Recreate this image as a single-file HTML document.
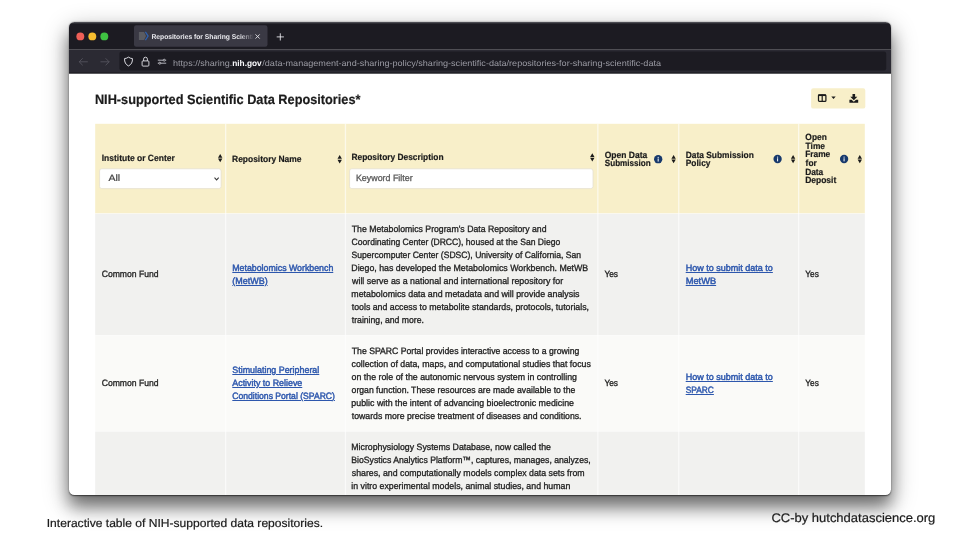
<!DOCTYPE html>
<html lang="en">
<head>
<meta charset="utf-8">
<title>Repositories for Sharing Scientific Data</title>
<style>
html,body{margin:0;padding:0;background:#fff;}
body{width:960px;height:540px;position:relative;overflow:hidden;font-family:"Liberation Sans",sans-serif;text-rendering:geometricPrecision;}
.t{position:absolute;white-space:pre;line-height:14px;height:14px;font-family:"Liberation Sans",sans-serif;transform-origin:0 50%;}
.win{position:absolute;left:69px;top:22px;width:822px;height:473px;border-radius:5.5px;background:#fff;
  box-shadow:0 0.8px 1.5px rgba(0,0,0,.6),0 12px 16px rgba(0,0,0,.42),0 8px 27px rgba(0,0,0,.33);}
.clip{position:absolute;left:0;top:0;width:822px;height:473px;border-radius:5.5px;overflow:hidden;}
.pg{position:absolute;left:-69px;top:-22px;width:960px;height:540px;will-change:transform;}
svg.shapes{position:absolute;left:0;top:0;}
</style>
</head>
<body>
<div class="win"><div class="clip"><div class="pg">
<svg class="shapes" width="960" height="540" viewBox="0 0 960 540">
  <!-- browser chrome -->
  <rect x="60" y="20" width="840" height="29.4" fill="#1c1b22"/>
  <rect x="60" y="22" width="840" height="0.9" fill="#56565c"/>
  <rect x="60" y="22.9" width="840" height="0.8" fill="#34343a"/>
  <rect x="60" y="49.3" width="840" height="24.1" fill="#2b2a33"/>
  <rect x="60" y="72.7" width="840" height="0.8" fill="#0e0e12"/>
  <rect x="134" y="25.2" width="133.5" height="21.6" rx="2.2" fill="#3a3944"/>
  <rect x="119.4" y="51.5" width="766.8" height="19" rx="2.2" fill="#1c1b22"/>
  <!-- traffic lights -->
  <circle cx="80.3" cy="36.4" r="3.95" fill="#ee5f57"/>
  <circle cx="92.3" cy="36.4" r="3.95" fill="#f6bd2f"/>
  <circle cx="104.3" cy="36.4" r="3.95" fill="#3fc242"/>
  <!-- favicon -->
  <path d="M138.9 32.1 H144.1 L146 36.05 L144.1 40 H138.9 Z" fill="#5b5c62"/>
  <path d="M145.4 31.9 L148.1 36.05 L145.4 40.2" fill="none" stroke="#2f62b0" stroke-width="1.25"/>
  <!-- tab close / plus -->
  <g transform="translate(255.3,34.2)"><path d="M0.2 0.2 L4.4 4.4 M4.4 0.2 L0.2 4.4" stroke="#e4e4ea" stroke-width="0.9" fill="none"/></g>
  <g transform="translate(276.5,33.1)"><path d="M3.8 0.2 V7.4 M0.2 3.8 H7.4" stroke="#f0f0f4" stroke-width="0.85" fill="none"/></g>
  <!-- nav arrows -->
  <g transform="translate(78.5,58.1)"><path d="M8.9 3.7 H0.8 M3.9 0.5 L0.7 3.7 L3.9 6.9" stroke="#55545d" stroke-width="0.9" fill="none" stroke-linecap="round" stroke-linejoin="round"/></g>
  <g transform="translate(100.2,58.1)"><path d="M0.7 3.7 H8.8 M5.7 0.5 L8.9 3.7 L5.7 6.9" stroke="#55545d" stroke-width="0.9" fill="none" stroke-linecap="round" stroke-linejoin="round"/></g>
  <!-- shield -->
  <g transform="translate(123.8,56.5) scale(1.07,1.05)"><path d="M4.4 0.6 C3.2 1.5 2 1.9 0.7 2 C0.6 5.2 1.6 7.7 4.4 9 C7.2 7.7 8.2 5.2 8.1 2 C6.8 1.9 5.6 1.5 4.4 0.6 Z" fill="none" stroke="#e2e2e8" stroke-width="0.9" stroke-linejoin="round"/></g>
  <!-- lock -->
  <g transform="translate(141.4,56.3)"><rect x="0.7" y="4.6" width="6.8" height="5.2" rx="0.9" fill="none" stroke="#e2e2e8" stroke-width="0.9"/><path d="M2.2 4.6 V2.8 A1.9 1.9 0 0 1 6 2.8 V4.6" fill="none" stroke="#e2e2e8" stroke-width="0.9"/></g>
  <!-- permissions -->
  <g transform="translate(157.6,58.6)"><path d="M0.2 1.6 H5.6 M7.6 1.6 H8.6 M0.2 4.6 H1.2 M3.2 4.6 H8.6" stroke="#cfcfd6" stroke-width="0.85" fill="none"/><circle cx="6.6" cy="1.6" r="1" fill="none" stroke="#cfcfd6" stroke-width="0.8"/><circle cx="2.2" cy="4.6" r="1" fill="none" stroke="#cfcfd6" stroke-width="0.8"/></g>

  <!-- page content -->
  <rect x="811.1" y="88.3" width="54.2" height="20.3" rx="2.2" fill="#f8efc9"/>
  <!-- columns icon -->
  <g transform="translate(817.9,94.2)"><rect x="0.6" y="0.6" width="7.4" height="6.6" rx="0.9" fill="none" stroke="#1b1b1b" stroke-width="1.25"/><path d="M0.5 1.05 H8.1" stroke="#1b1b1b" stroke-width="1.6"/><path d="M4.3 0.6 V7.2" stroke="#1b1b1b" stroke-width="1.2"/></g>
  <g transform="translate(831.1,96.4)"><path d="M0.2 0.1 H4.6 L2.4 2.5 Z" fill="#1b1b1b"/></g>
  <!-- download icon -->
  <g transform="translate(849.2,93.8)"><path d="M3.3 0.1 H5.9 V3.0 H8.1 L4.6 6.5 L1.1 3.0 H3.3 Z" fill="#1b1b1b"/><path d="M0.2 5.9 H2.4 L4.6 7.9 L6.8 5.9 H9 V8.9 H0.2 Z" fill="#1b1b1b"/></g>

  <!-- table -->
  <rect x="95.2" y="123.8" width="769.6" height="89.9" fill="#f8efc9"/>
  <rect x="95.2" y="213.6" width="769.6" height="121.9" fill="#f1f1ef"/>
  <rect x="95.2" y="335.4" width="769.6" height="96.1" fill="#fafaf8"/>
  <rect x="95.2" y="431.4" width="769.6" height="80" fill="#f1f1ef"/>
  <g fill="#fff" fill-opacity="0.45">
    <rect x="95.2" y="213.1" width="769.6" height="0.9"/>
    <rect x="95.2" y="334.9" width="769.6" height="0.9"/>
    <rect x="95.2" y="430.9" width="769.6" height="0.9"/>
  </g>
  <g fill="#fff" fill-opacity="0.62">
    <rect x="225" y="123.8" width="1.3" height="380"/>
    <rect x="344.8" y="123.8" width="1.3" height="380"/>
    <rect x="597.2" y="123.8" width="1.3" height="380"/>
    <rect x="678.1" y="123.8" width="1.3" height="380"/>
    <rect x="798" y="123.8" width="1.3" height="380"/>
  </g>
  <!-- select + input -->
  <rect x="99.6" y="168.8" width="121.5" height="19.8" rx="2.2" fill="#fff" stroke="#e2decf" stroke-width="0.7"/>
  <g transform="translate(214.2,177.4)"><path d="M0.3 0.3 L2.4 2.5 L4.5 0.3" fill="none" stroke="#3a3a3a" stroke-width="1.05"/></g>
  <rect x="349.6" y="168.8" width="243.4" height="19.8" rx="2.2" fill="#fff" stroke="#e2decf" stroke-width="0.7"/>

  <!-- sort icons -->
  <g fill="#1b1b1b">
    <path id="srt" transform="translate(218.1,154)" d="M2.1 -0.1 L4.3 3.65 H-0.1 Z M-0.1 4.45 H4.3 L2.1 8.2 Z"/>
    <path transform="translate(337.6,155.2)" d="M2.1 -0.1 L4.3 3.65 H-0.1 Z M-0.1 4.45 H4.3 L2.1 8.2 Z"/>
    <path transform="translate(590.2,153.4)" d="M2.1 -0.1 L4.3 3.65 H-0.1 Z M-0.1 4.45 H4.3 L2.1 8.2 Z"/>
    <path transform="translate(671.5,155.1)" d="M2.1 -0.1 L4.3 3.65 H-0.1 Z M-0.1 4.45 H4.3 L2.1 8.2 Z"/>
    <path transform="translate(791,155.1)" d="M2.1 -0.1 L4.3 3.65 H-0.1 Z M-0.1 4.45 H4.3 L2.1 8.2 Z"/>
    <path transform="translate(857.7,155.1)" d="M2.1 -0.1 L4.3 3.65 H-0.1 Z M-0.1 4.45 H4.3 L2.1 8.2 Z"/>
  </g>
  <!-- info icons -->
  <g transform="translate(654.1,155.2)"><circle cx="4.1" cy="4" r="4.15" fill="#17396c"/><rect x="3.55" y="3.25" width="1.05" height="3.1" fill="#fff" fill-opacity="0.95"/><circle cx="4.08" cy="2.1" r="0.65" fill="#fff" fill-opacity="0.95"/></g>
  <g transform="translate(773.5,155)"><circle cx="4.1" cy="4" r="4.15" fill="#17396c"/><rect x="3.55" y="3.25" width="1.05" height="3.1" fill="#fff" fill-opacity="0.95"/><circle cx="4.08" cy="2.1" r="0.65" fill="#fff" fill-opacity="0.95"/></g>
  <g transform="translate(840,155)"><circle cx="4.1" cy="4" r="4.15" fill="#17396c"/><rect x="3.55" y="3.25" width="1.05" height="3.1" fill="#fff" fill-opacity="0.95"/><circle cx="4.08" cy="2.1" r="0.65" fill="#fff" fill-opacity="0.95"/></g>
</svg>
<span class="t" style="left:151px;top:31px;font-size:7.0px;font-weight:700;color:#e9e9ee;transform:translateX(0.42px) scaleX(0.9608);-webkit-mask-image:linear-gradient(90deg,#000 86%,transparent 100%);mask-image:linear-gradient(90deg,#000 86%,transparent 100%);">Repositories for Sharing Scienti</span>
<span class="t" style="left:173px;top:56px;font-size:8.4px;font-weight:400;color:#9a9aa3;transform:translateX(0.06px) scaleX(1.0791);">https://sharing.</span>
<span class="t" style="left:232px;top:56px;font-size:8.4px;font-weight:700;color:#fbfbfe;transform:translateX(0.20px) scaleX(0.9915);">nih.gov</span>
<span class="t" style="left:262px;top:56px;font-size:8.4px;font-weight:400;color:#9a9aa3;transform:translateX(0.30px) scaleX(1.0842);">/data-management-and-sharing-policy/sharing-scientific-data/repositories-for-sharing-scientific-data</span>
<span class="t" style="left:94px;top:93px;font-size:13.6px;font-weight:700;color:#1b1b1b;transform:translateX(0.90px) scaleX(0.9377);-webkit-text-stroke:0.2px currentColor;">NIH-supported Scientific Data Repositories*</span>
<span class="t" style="left:101px;top:151px;font-size:9.0px;font-weight:700;color:#1b1b1b;transform:translateX(0.73px) scaleX(0.9416);-webkit-text-stroke:0.2px currentColor;">Institute or Center</span>
<span class="t" style="left:108px;top:171px;font-size:9.2px;font-weight:400;color:#444444;transform:translateX(0.40px) scaleX(1.1487);-webkit-text-stroke:0.2px currentColor;">All</span>
<span class="t" style="left:232px;top:152px;font-size:9.0px;font-weight:700;color:#1b1b1b;transform:translateX(0.03px) scaleX(0.9386);-webkit-text-stroke:0.2px currentColor;">Repository Name</span>
<span class="t" style="left:351px;top:150px;font-size:9.0px;font-weight:700;color:#1b1b1b;transform:translateX(0.43px) scaleX(0.9306);-webkit-text-stroke:0.2px currentColor;">Repository Description</span>
<span class="t" style="left:355px;top:171px;font-size:9.2px;font-weight:400;color:#5c5c5c;transform:translateX(0.92px) scaleX(0.9665);-webkit-text-stroke:0.32px currentColor;">Keyword Filter</span>
<span class="t" style="left:604px;top:148px;font-size:9.0px;font-weight:700;color:#1b1b1b;transform:translateX(0.76px) scaleX(0.9444);-webkit-text-stroke:0.2px currentColor;">Open Data</span>
<span class="t" style="left:604px;top:156px;font-size:9.0px;font-weight:700;color:#1b1b1b;transform:translateX(0.77px) scaleX(0.9015);-webkit-text-stroke:0.2px currentColor;">Submission</span>
<span class="t" style="left:685px;top:148px;font-size:9.0px;font-weight:700;color:#1b1b1b;transform:translateX(0.78px) scaleX(0.9312);-webkit-text-stroke:0.2px currentColor;">Data Submission</span>
<span class="t" style="left:685px;top:156px;font-size:9.0px;font-weight:700;color:#1b1b1b;transform:translateX(0.78px) scaleX(0.9300);-webkit-text-stroke:0.2px currentColor;">Policy</span>
<span class="t" style="left:805px;top:130px;font-size:9.0px;font-weight:700;color:#1b1b1b;transform:translateX(0.37px) scaleX(0.9300);-webkit-text-stroke:0.2px currentColor;">Open</span>
<span class="t" style="left:805px;top:139px;font-size:9.0px;font-weight:700;color:#1b1b1b;transform:translateX(0.60px) scaleX(0.9300);-webkit-text-stroke:0.2px currentColor;">Time</span>
<span class="t" style="left:805px;top:147px;font-size:9.0px;font-weight:700;color:#1b1b1b;transform:translateX(0.13px) scaleX(0.9300);-webkit-text-stroke:0.2px currentColor;">Frame</span>
<span class="t" style="left:805px;top:156px;font-size:9.0px;font-weight:700;color:#1b1b1b;transform:translateX(0.60px) scaleX(0.9300);-webkit-text-stroke:0.2px currentColor;">for</span>
<span class="t" style="left:805px;top:165px;font-size:9.0px;font-weight:700;color:#1b1b1b;transform:translateX(0.13px) scaleX(0.9300);-webkit-text-stroke:0.2px currentColor;">Data</span>
<span class="t" style="left:805px;top:173px;font-size:9.0px;font-weight:700;color:#1b1b1b;transform:translateX(0.13px) scaleX(0.9431);-webkit-text-stroke:0.2px currentColor;">Deposit</span>
<span class="t" style="left:101px;top:267px;font-size:9.2px;font-weight:400;color:#1f1f1f;transform:translateX(0.67px) scaleX(0.9367);-webkit-text-stroke:0.32px currentColor;">Common Fund</span>
<span class="t" style="left:232px;top:261px;font-size:9.2px;font-weight:400;color:#2d57ad;transform:translateX(0.30px) scaleX(0.9568);text-decoration:underline;text-decoration-thickness:0.65px;text-underline-offset:1.0px;-webkit-text-stroke:0.45px currentColor;">Metabolomics Workbench</span>
<span class="t" style="left:232px;top:274px;font-size:9.2px;font-weight:400;color:#2d57ad;transform:translateX(0.30px) scaleX(0.9750);text-decoration:underline;text-decoration-thickness:0.65px;text-underline-offset:1.0px;-webkit-text-stroke:0.45px currentColor;">(MetWB)</span>
<span class="t" style="left:351px;top:222px;font-size:9.2px;font-weight:400;color:#1f1f1f;transform:translateX(0.80px) scaleX(0.9473);-webkit-text-stroke:0.32px currentColor;">The Metabolomics Program&#x27;s Data Repository and</span>
<span class="t" style="left:351px;top:235px;font-size:9.2px;font-weight:400;color:#1f1f1f;transform:translateX(0.57px) scaleX(0.9326);-webkit-text-stroke:0.32px currentColor;">Coordinating Center (DRCC), housed at the San Diego</span>
<span class="t" style="left:351px;top:248px;font-size:9.2px;font-weight:400;color:#1f1f1f;transform:translateX(0.57px) scaleX(0.9343);-webkit-text-stroke:0.32px currentColor;">Supercomputer Center (SDSC), University of California, San</span>
<span class="t" style="left:351px;top:261px;font-size:9.2px;font-weight:400;color:#1f1f1f;transform:translateX(0.32px) scaleX(0.9572);-webkit-text-stroke:0.32px currentColor;">Diego, has developed the Metabolomics Workbench. MetWB</span>
<span class="t" style="left:352px;top:274px;font-size:9.2px;font-weight:400;color:#1f1f1f;transform:translateX(0.04px) scaleX(0.9636);-webkit-text-stroke:0.32px currentColor;">will serve as a national and international repository for</span>
<span class="t" style="left:351px;top:287px;font-size:9.2px;font-weight:400;color:#1f1f1f;transform:translateX(0.32px) scaleX(0.9609);-webkit-text-stroke:0.32px currentColor;">metabolomics data and metadata and will provide analysis</span>
<span class="t" style="left:351px;top:300px;font-size:9.2px;font-weight:400;color:#1f1f1f;transform:translateX(0.80px) scaleX(0.9536);-webkit-text-stroke:0.32px currentColor;">tools and access to metabolite standards, protocols, tutorials,</span>
<span class="t" style="left:351px;top:313px;font-size:9.2px;font-weight:400;color:#1f1f1f;transform:translateX(0.80px) scaleX(0.9408);-webkit-text-stroke:0.32px currentColor;">training, and more.</span>
<span class="t" style="left:604px;top:267px;font-size:9.2px;font-weight:400;color:#1f1f1f;transform:translateX(0.40px) scaleX(0.9085);-webkit-text-stroke:0.32px currentColor;">Yes</span>
<span class="t" style="left:685px;top:261px;font-size:9.2px;font-weight:400;color:#2d57ad;transform:translateX(0.70px) scaleX(0.9808);text-decoration:underline;text-decoration-thickness:0.65px;text-underline-offset:1.0px;-webkit-text-stroke:0.45px currentColor;">How to submit data to</span>
<span class="t" style="left:685px;top:274px;font-size:9.2px;font-weight:400;color:#2d57ad;transform:translateX(0.70px) scaleX(1.0100);text-decoration:underline;text-decoration-thickness:0.65px;text-underline-offset:1.0px;-webkit-text-stroke:0.45px currentColor;">MetWB</span>
<span class="t" style="left:805px;top:267px;font-size:9.2px;font-weight:400;color:#1f1f1f;transform:translateX(0.30px) scaleX(0.9017);-webkit-text-stroke:0.32px currentColor;">Yes</span>
<span class="t" style="left:101px;top:376px;font-size:9.2px;font-weight:400;color:#1f1f1f;transform:translateX(0.67px) scaleX(0.9367);-webkit-text-stroke:0.32px currentColor;">Common Fund</span>
<span class="t" style="left:232px;top:363px;font-size:9.2px;font-weight:400;color:#2d57ad;transform:translateX(0.30px) scaleX(0.9676);text-decoration:underline;text-decoration-thickness:0.65px;text-underline-offset:1.0px;-webkit-text-stroke:0.45px currentColor;">Stimulating Peripheral</span>
<span class="t" style="left:232px;top:376px;font-size:9.2px;font-weight:400;color:#2d57ad;transform:translateX(0.30px) scaleX(0.9647);text-decoration:underline;text-decoration-thickness:0.65px;text-underline-offset:1.0px;-webkit-text-stroke:0.45px currentColor;">Activity to Relieve</span>
<span class="t" style="left:232px;top:389px;font-size:9.2px;font-weight:400;color:#2d57ad;transform:translateX(0.30px) scaleX(0.9364);text-decoration:underline;text-decoration-thickness:0.65px;text-underline-offset:1.0px;-webkit-text-stroke:0.45px currentColor;">Conditions Portal (SPARC)</span>
<span class="t" style="left:351px;top:344px;font-size:9.2px;font-weight:400;color:#1f1f1f;transform:translateX(0.80px) scaleX(0.9427);-webkit-text-stroke:0.32px currentColor;">The SPARC Portal provides interactive access to a growing</span>
<span class="t" style="left:351px;top:357px;font-size:9.2px;font-weight:400;color:#1f1f1f;transform:translateX(0.56px) scaleX(0.9541);-webkit-text-stroke:0.32px currentColor;">collection of data, maps, and computational studies that focus</span>
<span class="t" style="left:351px;top:370px;font-size:9.2px;font-weight:400;color:#1f1f1f;transform:translateX(0.56px) scaleX(0.9597);-webkit-text-stroke:0.32px currentColor;">on the role of the autonomic nervous system in controlling</span>
<span class="t" style="left:351px;top:383px;font-size:9.2px;font-weight:400;color:#1f1f1f;transform:translateX(0.56px) scaleX(0.9428);-webkit-text-stroke:0.32px currentColor;">organ function. These resources are made available to the</span>
<span class="t" style="left:351px;top:396px;font-size:9.2px;font-weight:400;color:#1f1f1f;transform:translateX(0.32px) scaleX(0.9625);-webkit-text-stroke:0.32px currentColor;">public with the intent of advancing bioelectronic medicine</span>
<span class="t" style="left:351px;top:409px;font-size:9.2px;font-weight:400;color:#1f1f1f;transform:translateX(0.80px) scaleX(0.9471);-webkit-text-stroke:0.32px currentColor;">towards more precise treatment of diseases and conditions.</span>
<span class="t" style="left:604px;top:376px;font-size:9.2px;font-weight:400;color:#1f1f1f;transform:translateX(0.40px) scaleX(0.9085);-webkit-text-stroke:0.32px currentColor;">Yes</span>
<span class="t" style="left:685px;top:370px;font-size:9.2px;font-weight:400;color:#2d57ad;transform:translateX(0.70px) scaleX(0.9808);text-decoration:underline;text-decoration-thickness:0.65px;text-underline-offset:1.0px;-webkit-text-stroke:0.45px currentColor;">How to submit data to</span>
<span class="t" style="left:685px;top:383px;font-size:9.2px;font-weight:400;color:#2d57ad;transform:translateX(0.70px) scaleX(0.9097);text-decoration:underline;text-decoration-thickness:0.65px;text-underline-offset:1.0px;-webkit-text-stroke:0.45px currentColor;">SPARC</span>
<span class="t" style="left:805px;top:376px;font-size:9.2px;font-weight:400;color:#1f1f1f;transform:translateX(0.30px) scaleX(0.9017);-webkit-text-stroke:0.32px currentColor;">Yes</span>
<span class="t" style="left:351px;top:440px;font-size:9.2px;font-weight:400;color:#1f1f1f;transform:translateX(0.32px) scaleX(0.9533);-webkit-text-stroke:0.32px currentColor;">Microphysiology Systems Database, now called the</span>
<span class="t" style="left:351px;top:453px;font-size:9.2px;font-weight:400;color:#1f1f1f;transform:translateX(0.33px) scaleX(0.9414);-webkit-text-stroke:0.32px currentColor;">BioSystics Analytics Platform™, captures, manages, analyzes,</span>
<span class="t" style="left:351px;top:466px;font-size:9.2px;font-weight:400;color:#1f1f1f;transform:translateX(0.80px) scaleX(0.9538);-webkit-text-stroke:0.32px currentColor;">shares, and computationally models complex data sets from</span>
<span class="t" style="left:351px;top:479px;font-size:9.2px;font-weight:400;color:#1f1f1f;transform:translateX(0.32px) scaleX(0.9549);-webkit-text-stroke:0.32px currentColor;">in vitro experimental models, animal studies, and human</span>
<span class="t" style="left:351px;top:492px;font-size:9.2px;font-weight:400;color:#1f1f1f;transform:translateX(0.56px) scaleX(0.9518);-webkit-text-stroke:0.32px currentColor;">clinical data. It is one of several components of the Tissue</span>
</div></div></div>
<div style="position:absolute;left:0;top:500px;width:960px;height:40px;will-change:transform;"><div style="position:absolute;left:0;top:-500px;width:960px;height:540px;">
<span class="t" style="left:46px;top:517px;font-size:11.6px;font-weight:400;color:#1a1a1a;transform:translateX(0.76px) scaleX(1.0408);-webkit-text-stroke:0.2px currentColor;">Interactive table of NIH-supported data repositories.</span>
<span class="t" style="left:771px;top:511px;font-size:12.5px;font-weight:400;color:#1a1a1a;transform:translateX(0.38px) scaleX(1.0396);-webkit-text-stroke:0.2px currentColor;">CC-by hutchdatascience.org</span>
</div></div>
</body>
</html>
